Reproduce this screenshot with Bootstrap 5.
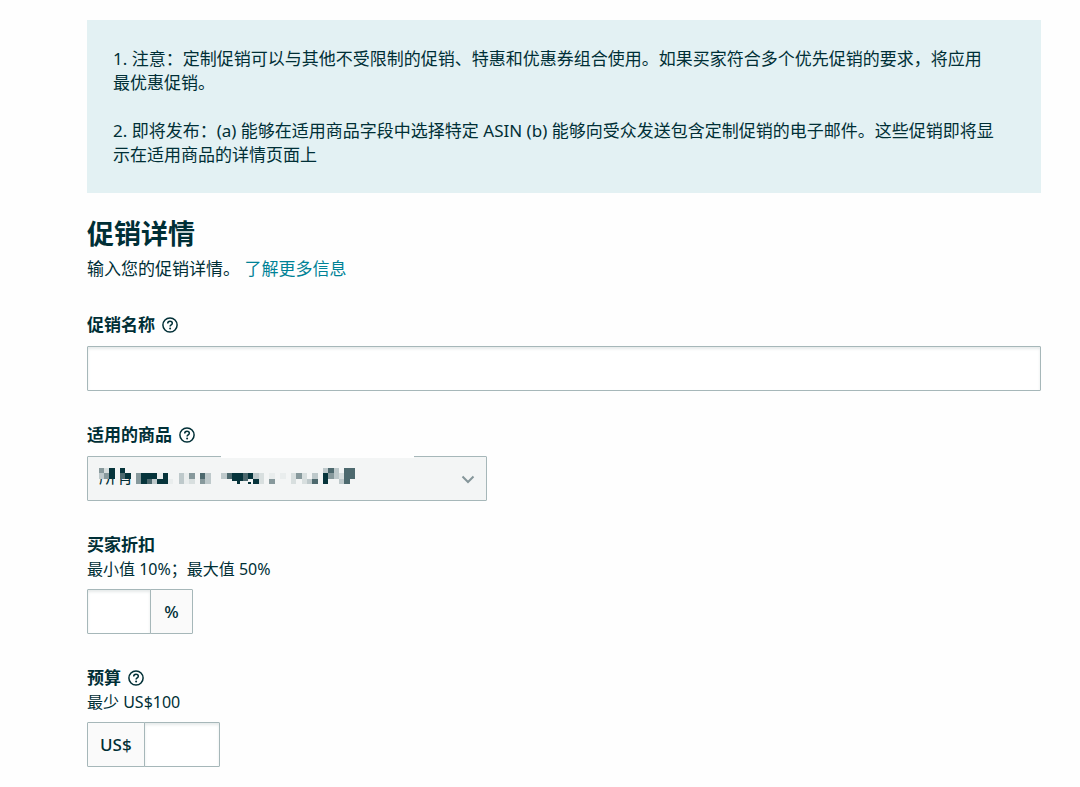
<!DOCTYPE html>
<html lang="zh-CN">
<head>
<meta charset="utf-8">
<meta name="viewport" content="width=device-width, initial-scale=1">
<title>促销详情</title>
<link href="https://cdn.jsdelivr.net/npm/bootstrap@5.3.0/dist/css/bootstrap.min.css" rel="stylesheet">
<style>
:root { --ink: #002f36; --line: #a6b7b9; }
body { font-family: "Noto Sans", "Noto Sans CJK SC", sans-serif; font-size: 17px; line-height: 24px; color: var(--ink); background: #fefefe; }
.page { padding: 20px 39px 20px 87px; }
.notice { background: #e3f1f3; padding: 27px 26px 26px; }
.notice p { margin-bottom: 24px; }
.notice p:last-child { margin-bottom: 0; }
h1 { font-size: 27px; line-height: 36px; font-weight: 700; margin: 23px 0 5px; }
.more { color: #008296; text-decoration: none; }
.field { margin-top: 32px; }
.field-head { display: flex; align-items: center; gap: 7px; margin-bottom: 9px; }
.field-head label { font-weight: 700; }
.hinted .field-head { margin-bottom: 0; }
.hint { font-size: 16px; line-height: 24px; margin-bottom: 8px; }
.help { border: 0; padding: 0; background: none; color: var(--ink); line-height: 0; }
.form-control.box { border: 1px solid var(--line); border-radius: 1px; height: 45px; background: #fff; box-shadow: inset 0 2px 3px #e6eaea; color: var(--ink); }
.input-group-text.unit { border: 1px solid var(--line); border-radius: 1px; background: #fafafa; color: var(--ink); font-size: 17px; font-weight: 500; padding: 0 12px; }
.percent { width: 106px; }
.percent .unit { width: 43px; justify-content: center; padding: 0; }
.budget { width: 133px; }
.picker { width: 400px; max-width: 100%; }
.form-select.choice { height: 45px; border: 1px solid var(--line); border-radius: 1px; background: #f3f5f5; color: var(--ink); font-size: 17px; line-height: 24px; padding: 0 40px 3px 11px; }
.chevron { right: 12px; top: 19px; pointer-events: none; }
.veil { left: 0; top: 0; pointer-events: none; }
</style>
</head>
<body>
<svg class="d-none" aria-hidden="true">
  <symbol id="question" viewBox="0 0 16 16">
    <circle cx="8" cy="8" r="7.1" fill="none" stroke="currentColor" stroke-width="1.5"/>
    <path d="M5.7 6.5C5.7 5 6.6 4.2 8 4.2s2.3.8 2.3 2c0 1.6-2.2 1.6-2.2 3.2" fill="none" stroke="currentColor" stroke-width="1.5"/>
    <circle cx="8.1" cy="11.6" r="1" fill="currentColor"/>
  </symbol>
</svg>
<main class="page">
  <section class="notice">
    <p>1. 注意：定制促销可以与其他不受限制的促销、特惠和优惠券组合使用。如果买家符合多个优先促销的要求，将应用<br>最优惠促销。</p>
    <p>2. 即将发布：(a) 能够在适用商品字段中选择特定 ASIN (b) 能够向受众发送包含定制促销的电子邮件。这些促销即将显<br>示在适用商品的详情页面上</p>
  </section>
  <h1>促销详情</h1>
  <p class="mb-0">输入您的促销详情。 <a class="more" href="#">了解更多信息</a></p>

  <form>
    <div class="field">
      <div class="field-head">
        <label for="promo-name">促销名称</label>
        <button type="button" class="help"><svg width="16" height="16"><use href="#question"/></svg></button>
      </div>
      <input type="text" class="form-control box" id="promo-name">
    </div>

    <div class="field">
      <div class="field-head">
        <label for="products">适用的商品</label>
        <button type="button" class="help"><svg width="16" height="16"><use href="#question"/></svg></button>
      </div>
      <div class="picker position-relative">
        <select class="form-select choice" id="products"><option>所有</option></select>
        <!-- redaction blocks over the chosen value -->
        <svg class="veil position-absolute" width="328" height="32" shape-rendering="crispEdges" aria-hidden="true">
          <path d="M134 0h193v2H134z" fill="#fefefe"/>
          <g transform="translate(11.6 12) scale(5.34)">
            <path d="M0 0h7v2H0z" fill="#f3f5f5"/>
            <path d="M2 0h1v2h-1zM4 0h1v1h-1zM5 1h1v1h-1zM8 1h1v2h-1zM9 1h2v1h-2zM12 1h1v2h-1zM11 2h1v1h-1zM25 1h2v1.5h-2zM28 1h1v1h-1zM29 2h1v1h-1zM42 1h1v2h-1z" fill="#06343b"/>
            <path d="M4 1h1v1h-1zM9 2h1v1h-1zM19 1h1v1h-1zM24 1h1v1h-1zM27 1h1v1.5h-1zM40 2h1v1h-1zM43 0h1v1h-1zM46 0h2v2h-2zM46 2h1v1h-1z" fill="#4d696e"/>
            <path d="M0 0h1v1h-1zM1 1h1v1h-1zM7 1h1v2h-1zM17 1h1v1h-1zM19 2h1v1h-1zM32 2h1v1h-1zM37 1h1v1h-1zM43 1h1v1h-1z" fill="#87999c"/>
            <path d="M0 1h1v1h-1zM10 2h1v1h-1zM15 1h1v2h-1zM20 1h1v2h-1zM23 1h1v1h-1zM29 1h1v1h-1zM39 2h1v1h-1zM40 1h1v1h-1zM42 0h1v1h-1zM44 0h1v2h-1zM45 2h1v1h-1z" fill="#bec9cb"/>
            <path d="M1 0h1v1h-1zM17 2h1v1h-1zM30 1h1v2h-1zM36 1h1v2h-1zM38 1h1v2h-1zM45 1h1v1h-1z" fill="#d8dfdf"/>
            <path d="M11 1h1v1h-1zM13 2h1v1h-1zM16 1h1v2h-1zM32 1h1v1h-1zM34 1h1v1h-1z" fill="#e9eded"/>
            <path d="M26 2.5h.5v.5h-.5zM28 2.6h.5v.4h-.5z" fill="#06343b"/>
          </g>
        </svg>
        <svg class="chevron position-absolute" width="14" height="9" viewBox="0 0 14 9" aria-hidden="true"><path d="M1.5 1.5L7 7l5.5-5.5" fill="none" stroke="#85969a" stroke-width="2"/></svg>
      </div>
    </div>

    <div class="field hinted">
      <div class="field-head"><label for="discount">买家折扣</label></div>
      <div class="hint">最小值 10%；最大值 50%</div>
      <div class="input-group percent">
        <input type="text" class="form-control box" id="discount">
        <span class="input-group-text unit">%</span>
      </div>
    </div>

    <div class="field hinted">
      <div class="field-head">
        <label for="budget">预算</label>
        <button type="button" class="help"><svg width="16" height="16"><use href="#question"/></svg></button>
      </div>
      <div class="hint">最少 US$100</div>
      <div class="input-group budget">
        <span class="input-group-text unit">US$</span>
        <input type="text" class="form-control box" id="budget">
      </div>
    </div>
  </form>
</main>
<script src="https://cdn.jsdelivr.net/npm/bootstrap@5.3.0/dist/js/bootstrap.bundle.min.js"></script>
</body>
</html>
